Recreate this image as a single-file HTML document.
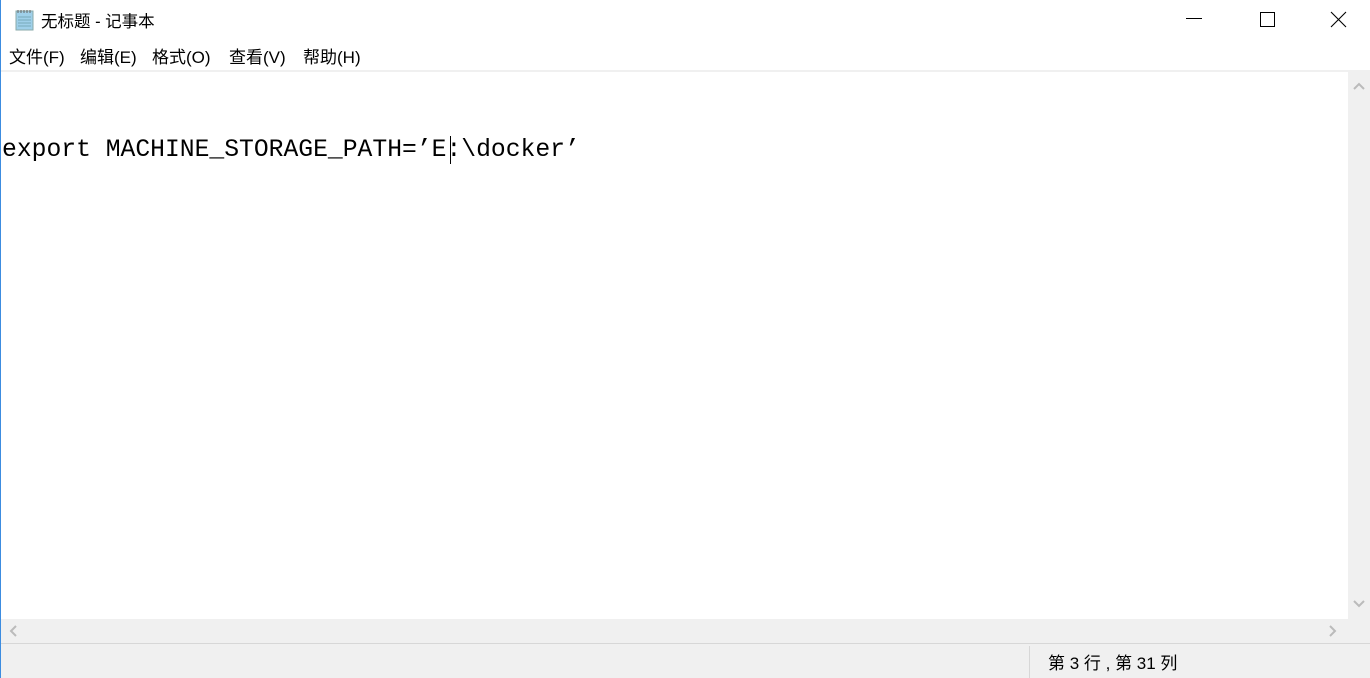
<!DOCTYPE html>
<html><head><meta charset="utf-8"><style>
body{margin:0;width:1370px;height:678px;overflow:hidden;background:#fff;position:relative;font-family:"Liberation Sans","Microsoft YaHei","Noto Sans CJK SC",sans-serif;}
.a{position:absolute}
.t{font-size:16px;color:#000;white-space:nowrap}
</style></head><body>
<div class="a" style="left:0;top:0;width:1px;height:678px;background:#3c8ce0"></div>
<svg class="a" style="left:13px;top:8px" width="24" height="24" viewBox="0 0 24 24"><rect x="3" y="3" width="17" height="19" fill="#9fd0ea" stroke="#8aa" stroke-width="1"/><path d="M5 2v3M8 2v3M11 2v3M14 2v3M17 2v3" stroke="#666" stroke-width="1"/><path d="M5 9h13M5 12h13M5 15h13M5 18h13" stroke="#7ab" stroke-width="1"/></svg>
<div class="a t" style="left:41px;top:8px;font-size:16.5px">无标题 - 记事本</div>
<svg class="a" style="left:1186px;top:18px" width="16" height="2"><rect width="16" height="1" fill="#000"/></svg>
<svg class="a" style="left:1260px;top:12px" width="16" height="16"><rect x="0.5" y="0.5" width="14" height="14" fill="none" stroke="#000"/></svg>
<svg class="a" style="left:1330px;top:11px" width="17" height="17"><path d="M1 1L16 16M16 1L1 16" stroke="#000" stroke-width="1.1"/></svg>
<div class="a t" style="left:9px;top:43px;font-size:17px">文件(F)</div>
<div class="a t" style="left:80px;top:43px;font-size:17px">编辑(E)</div>
<div class="a t" style="left:152px;top:43px;font-size:17px">格式(O)</div>
<div class="a t" style="left:229px;top:43px;font-size:17px">查看(V)</div>
<div class="a t" style="left:303px;top:43px;font-size:17px">帮助(H)</div>
<div class="a" style="left:1px;top:70px;width:1369px;height:2px;background:#f0f0f0"></div>
<div class="a" style="left:2px;top:136px;font-family:'Liberation Mono',monospace;font-size:24.7px;color:#000;white-space:pre;">export MACHINE_STORAGE_PATH=’E:\docker’</div>
<div class="a" style="left:450px;top:136px;width:1px;height:28px;background:#000"></div>
<div class="a" style="left:1348px;top:72px;width:22px;height:547px;background:#f0f0f0"></div>
<svg class="a" style="left:1353px;top:81px" width="12" height="10"><path d="M1 8L6 3L11 8" fill="none" stroke="#bbb" stroke-width="2"/></svg>
<svg class="a" style="left:1353px;top:599px" width="12" height="10"><path d="M1 2L6 7L11 2" fill="none" stroke="#bbb" stroke-width="2"/></svg>
<div class="a" style="left:1px;top:619px;width:1369px;height:25px;background:#f0f0f0"></div>
<svg class="a" style="left:8px;top:625px" width="10" height="12"><path d="M8 1L3 6L8 11" fill="none" stroke="#bbb" stroke-width="2"/></svg>
<svg class="a" style="left:1328px;top:625px" width="10" height="12"><path d="M2 1L7 6L2 11" fill="none" stroke="#bbb" stroke-width="2"/></svg>
<div class="a" style="left:1px;top:643px;width:1369px;height:1px;background:#d7d7d7"></div>
<div class="a" style="left:1px;top:644px;width:1369px;height:34px;background:#f0f0f0"></div>
<div class="a" style="left:1029px;top:646px;width:1px;height:32px;background:#d7d7d7"></div>
<div class="a t" style="left:1048px;top:649px;font-size:17px">第 3 行 , 第 31 列</div>
</body></html>
